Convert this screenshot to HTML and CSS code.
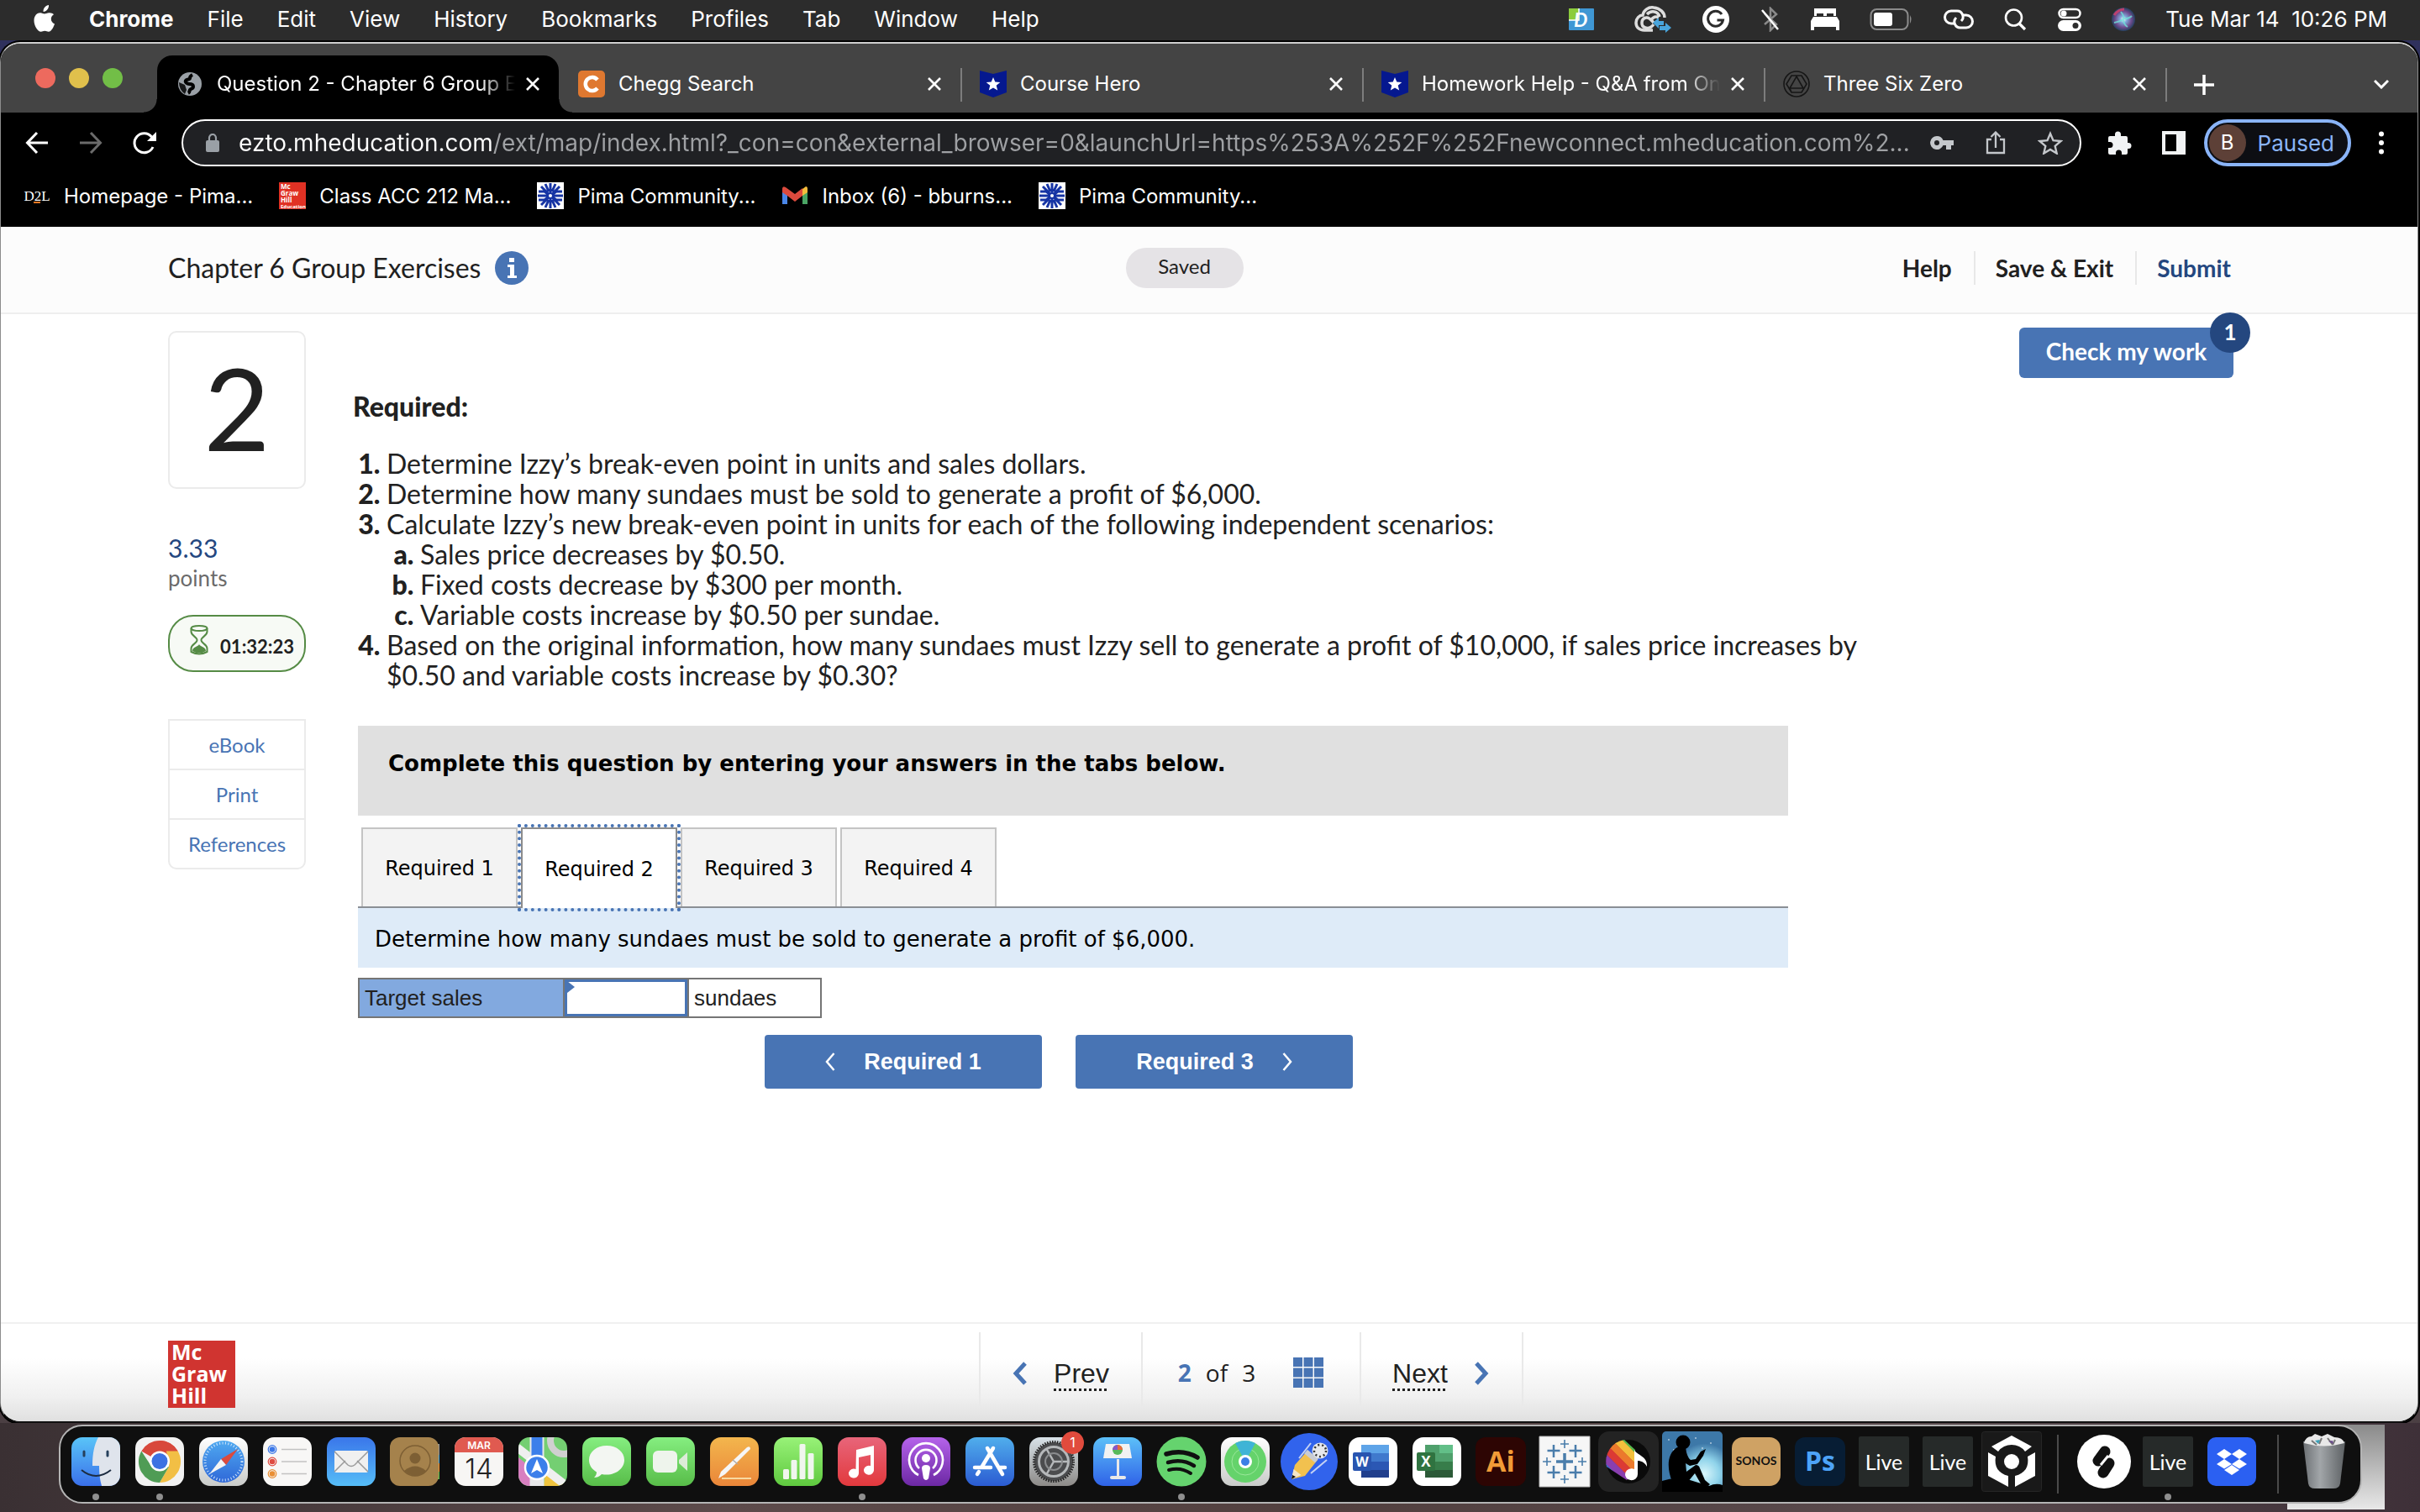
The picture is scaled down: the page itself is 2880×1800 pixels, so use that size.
FILE: index.html
```html
<!DOCTYPE html>
<html lang="en">
<head>
<meta charset="utf-8">
<title>Question 2 - Chapter 6 Group Exercises</title>
<link rel="stylesheet" href="styles.css">
</head>
<body>
<svg class="defs" aria-hidden="true">
  <defs>
    <linearGradient id="gBlue" x1="0" y1="0" x2="0" y2="1"><stop offset="0" stop-color="#3a76ea"/><stop offset="1" stop-color="#56bdf7"/></linearGradient>
    <linearGradient id="gFinder" x1="0" y1="0" x2="0" y2="1"><stop offset="0" stop-color="#59c4f8"/><stop offset="1" stop-color="#3a70ea"/></linearGradient>
    <linearGradient id="gSafari" x1="0" y1="0" x2="0" y2="1"><stop offset="0" stop-color="#4fa9f0"/><stop offset="1" stop-color="#2f68d8"/></linearGradient>
    <linearGradient id="gGreen" x1="0" y1="0" x2="0" y2="1"><stop offset="0" stop-color="#85ee80"/><stop offset="1" stop-color="#58bd49"/></linearGradient>
    <linearGradient id="gLime" x1="0" y1="0" x2="0" y2="1"><stop offset="0" stop-color="#98f278"/><stop offset="1" stop-color="#5fc93f"/></linearGradient>
    <linearGradient id="gOrange" x1="0" y1="0" x2="0" y2="1"><stop offset="0" stop-color="#f3b64d"/><stop offset="1" stop-color="#ea8639"/></linearGradient>
    <linearGradient id="gRed" x1="0" y1="0" x2="0" y2="1"><stop offset="0" stop-color="#e8657a"/><stop offset="1" stop-color="#e2393d"/></linearGradient>
    <linearGradient id="gPurple" x1="0" y1="0" x2="0" y2="1"><stop offset="0" stop-color="#b563ea"/><stop offset="1" stop-color="#6c28a4"/></linearGradient>
    <linearGradient id="gStore" x1="0" y1="0" x2="0" y2="1"><stop offset="0" stop-color="#50aeec"/><stop offset="1" stop-color="#2b5bd2"/></linearGradient>
    <linearGradient id="gGrey" x1="0" y1="0" x2="0" y2="1"><stop offset="0" stop-color="#d8e2e8"/><stop offset="1" stop-color="#8d8b88"/></linearGradient>
    <linearGradient id="gKey" x1="0" y1="0" x2="0" y2="1"><stop offset="0" stop-color="#5cc0f8"/><stop offset="1" stop-color="#2f62e8"/></linearGradient>
    <linearGradient id="gWhite" x1="0" y1="0" x2="0" y2="1"><stop offset="0" stop-color="#ffffff"/><stop offset="1" stop-color="#c9cbc9"/></linearGradient>
    <linearGradient id="gBin" x1="0" y1="0" x2="1" y2="0"><stop offset="0" stop-color="#6c7074"/><stop offset=".4" stop-color="#a2a6a9"/><stop offset="1" stop-color="#5d6164"/></linearGradient>
    <radialGradient id="gSiri"><stop offset="0" stop-color="#ffffff"/><stop offset=".3" stop-color="#7fa6d8"/><stop offset=".7" stop-color="#6d4a8c"/><stop offset="1" stop-color="#24415f"/></radialGradient>
    <radialGradient id="gKindle" cx=".7" cy=".7"><stop offset="0" stop-color="#d8f6fb"/><stop offset=".5" stop-color="#8fd3ea"/><stop offset="1" stop-color="#3d78a8"/></radialGradient>
    <clipPath id="tile"><rect width="58" height="58" rx="13"/></clipPath>
    <clipPath id="fan"><path d="M31 10A26 26 0 0 0 10 42L34 58l10-12V22z"/></clipPath>
    <symbol id="close" viewBox="0 0 18 18"><path d="M2 2l14 14M16 2L2 16" stroke="currentColor" stroke-width="2.6" fill="none"/></symbol>
    <symbol id="hero" viewBox="0 0 32 32"><path d="M0 0l16 4L32 0v26l-16 6L0 26z" fill="#05188f"/><path d="M16 8l2.300 5.400 6 .5-4.600 3.900 1.500 5.800L16 20.500l-5.200 3.100 1.500-5.800-4.600-3.900 6-.5z" fill="#fff"/></symbol>
    <symbol id="pima" viewBox="0 0 32 32"><path fill="#fff" d="M0 0h32v32H0z"/><g stroke="#1634a4" stroke-width="3" fill="none"><path d="M16 1v30M1 16h30M5 5l22 22M27 5L5 27M2 11h7l4 3M2 21h7l4-3M30 11h-7l-4 3M30 21h-7l-4-3M10 2l4 9M22 2l-4 9M10 30l4-9M22 30l-4-9"/></g><circle cx="16" cy="16" r="2" fill="#fff"/></symbol>
    <symbol id="live" viewBox="0 0 62 62"><rect x="1" y="1" width="60" height="60" rx="2" fill="#262a29"/><text x="31" y="41" font-size="25" text-anchor="middle" fill="#fff" font-family="Lato, sans-serif">Live</text></symbol>
  </defs>
</svg>

<header class="menubar">
  <svg class="apple" viewBox="0 0 26 32" aria-label="Apple"><path fill="#fff" d="M18 0c.3 2.200-.600 4.200-1.800 5.600C15 7 13.200 8 11.600 7.900c-.300-2.100.700-4.200 1.800-5.400C14.600 1.100 16.500.1 18 0zM24 11.200c-2 1.200-3.200 3-3.200 5.300 0 2.700 1.600 4.800 4.200 5.900-.9 2.700-3.600 9.300-7.200 9.300-1.800 0-2.500-1-4.500-1s-2.800 1-4.500 1C4.600 31.700.5 24.500.5 18.500c0-6 3.800-9.200 7.400-9.200 2 0 3.900 1.300 5 1.300 1.200 0 3.500-1.500 6.100-1.300 1.900.1 3.700.7 5 1.900z"/></svg>
  <nav class="menus" aria-label="Menu bar">
    <strong>Chrome</strong><span>File</span><span>Edit</span><span>View</span><span>History</span><span>Bookmarks</span><span>Profiles</span><span>Tab</span><span>Window</span><span>Help</span>
  </nav>
  <div class="status">
    <svg class="first" width="30" height="26" viewBox="0 0 30 26"><rect width="30" height="26" rx="1" fill="#3f97d4"/><path d="M0 0h12v14H0z" fill="#8ccc3c"/><path d="M0 14h12V0" stroke="#fff" stroke-width="1.500" fill="none"/><text x="6" y="22" font-size="23" font-style="italic" font-weight="700" fill="#fff" font-family="Lato, sans-serif">D</text></svg>
    <svg width="44" height="32" viewBox="0 0 44 32"><g fill="none" stroke="#ddd" stroke-width="3.500"><path d="M22 29H12C5 29 2 25 2 20c0-5 4-9 8-9 1-6 7-10 13-9 8 1 13 6 13 12"/><path d="M23 22c-3 4-7 5-10 4-6-2-5-11 1-12 4-1 6 3 9 6"/><path d="M15 10c5-5 13-4 15 3M20 17c2-4 6-5 9-3"/></g><path fill="#49a5dc" d="M22 20l7-6v4h6v5h-6v4zM44 26l-7-6v4h-7v5h7v3z"/></svg>
    <svg width="34" height="34" viewBox="0 0 34 34"><circle cx="17" cy="17" r="16" fill="#fff"/><path d="M24 11a9 9 0 1 0 1.500 7h-7" fill="none" stroke="#2c2c2c" stroke-width="3"/></svg>
    <svg width="24" height="30" viewBox="0 0 24 30"><path d="M5 8l14 13-7 7V2l7 7L5 21" fill="none" stroke="#8b8b8b" stroke-width="2.500"/><path d="M2 4l19 23" stroke="#fff" stroke-width="2.500"/></svg>
    <svg width="34" height="26" viewBox="0 0 34 26"><path fill="#fff" d="M4 0h26v9h-3V6h-8v3h-4V6H7v3H4zM0 15l3-5h28l3 5v11h-4v-4H4v4H0z"/></svg>
    <svg width="52" height="28" viewBox="0 0 52 28"><rect x="1.500" y="2" width="44" height="24" rx="7" fill="none" stroke="#8b8b8b" stroke-width="2"/><rect x="5" y="6" width="22" height="16" rx="3" fill="#fff"/><path d="M48 9q3 5 0 10z" fill="#8b8b8b"/></svg>
    <svg width="36" height="24" viewBox="0 0 36 24"><g fill="none" stroke="#fff" stroke-width="3"><path d="M14 17H9a7 7 0 0 1 0-15h7a7 7 0 0 1 5 12"/><path d="M22 7h5a7 7 0 0 1 0 15h-7a7 7 0 0 1-5-12"/></g></svg>
    <svg width="28" height="28" viewBox="0 0 28 28"><circle cx="11.500" cy="12" r="9.500" fill="none" stroke="#fff" stroke-width="2.600"/><path d="M18 19l7 7" stroke="#fff" stroke-width="3.200"/></svg>
    <svg width="28" height="28" viewBox="0 0 28 28"><rect x="1.500" y="2" width="25" height="10" rx="5" fill="none" stroke="#fff" stroke-width="2.500"/><circle cx="7" cy="7" r="3.500" fill="#fff"/><rect y="15" width="28" height="13" rx="6.500" fill="#fff"/><circle cx="21" cy="21.500" r="3.500" fill="#2c2c2c"/></svg>
    <svg width="28" height="28" viewBox="0 0 28 28"><circle cx="14" cy="14" r="14" fill="url(#gSiri)"/><path d="M3 9q5-7 12-7" stroke="#d8406c" stroke-width="3" fill="none" opacity=".8"/><path d="M3 18q10-2 11-5t-3-8M14 13q6 1 10-3M14 13q0 7 5 10" stroke="#6fe0d8" stroke-width="2" fill="none" opacity=".8"/></svg>
    <time>Tue Mar 14&nbsp; 10:26 PM</time>
  </div>
</header>

<div class="window">
  <div class="tabstrip">
    <div class="lights"><i class="red"></i><i class="yellow"></i><i class="green"></i></div>
    <div class="tab active">
      <svg class="fav" viewBox="0 0 32 32"><circle cx="16" cy="16" r="14" fill="#9aa0a6"/><path d="M19 5c-2 1-3 2-3 4s-4 1-5 3 2 4 4 4 5 0 5 3-3 2-4 4 0 3-2 4" fill="none" stroke="#000" stroke-width="4"/><path d="M3 14l7 3 2 6-2 5q-7-5-7-14z" fill="#000" opacity=".85"/></svg>
      <span class="tabtitle fade">Question 2 - Chapter 6 Group Exercises</span>
      <button class="ico" aria-label="Close tab"><svg width="18" height="18"><use href="#close"/></svg></button>
    </div>
    <div class="tab plain">
      <svg class="fav" viewBox="0 0 32 32"><rect width="32" height="32" rx="5" fill="#df7830"/><path d="M23 11a8 8 0 1 0 0 10" fill="none" stroke="#fff" stroke-width="4.500"/></svg>
      <span class="tabtitle">Chegg Search</span>
      <button class="ico" aria-label="Close tab"><svg width="18" height="18"><use href="#close"/></svg></button>
    </div>
    <div class="tab plain">
      <svg class="fav"><use href="#hero"/></svg>
      <span class="tabtitle">Course Hero</span>
      <button class="ico" aria-label="Close tab"><svg width="18" height="18"><use href="#close"/></svg></button>
    </div>
    <div class="tab plain">
      <svg class="fav"><use href="#hero"/></svg>
      <span class="tabtitle fade">Homework Help - Q&amp;A from Online Tutors</span>
      <button class="ico" aria-label="Close tab"><svg width="18" height="18"><use href="#close"/></svg></button>
    </div>
    <div class="tab plain">
      <svg class="fav" viewBox="0 0 32 32"><g fill="none" stroke="#161616" stroke-width="1.600"><circle cx="16" cy="16" r="15"/><path d="M10 6h12l6 10-6 10H10L4 16zM16 7l8 14H8zM8 21h16M10 26l-2-5"/></g></svg>
      <span class="tabtitle">Three Six Zero</span>
      <button class="ico" aria-label="Close tab"><svg width="18" height="18"><use href="#close"/></svg></button>
    </div>
    <button class="ico newtab" aria-label="New tab"><svg width="24" height="24" viewBox="0 0 24 24"><path d="M12 0v24M0 12h24" stroke="#fff" stroke-width="3.500"/></svg></button>
    <button class="ico tabsearch" aria-label="Search tabs"><svg width="18" height="12" viewBox="0 0 18 12"><path d="M1 2l8 8 8-8" fill="none" stroke="#fff" stroke-width="3"/></svg></button>
  </div>

  <div class="toolbar">
    <button class="ico" aria-label="Back"><svg width="28" height="28" viewBox="0 0 28 28"><path d="M27 14H3M14 2L2.500 14 14 26" fill="none" stroke="#fff" stroke-width="3"/></svg></button>
    <button class="ico" aria-label="Forward"><svg width="28" height="28" viewBox="0 0 28 28"><path d="M1 14h24M14 2l11.500 12L14 26" fill="none" stroke="#6b6b6b" stroke-width="3"/></svg></button>
    <button class="ico" aria-label="Reload"><svg width="28" height="28" viewBox="0 0 28 28"><path d="M24 19a11.500 11.500 0 1 1-1.500-12" fill="none" stroke="#fff" stroke-width="3"/><path d="M28 1v11H17z" fill="#fff"/></svg></button>
    <div class="urlbar">
      <svg width="16" height="22" viewBox="0 0 16 22"><rect y="8" width="16" height="14" rx="2" fill="#9aa0a6"/><path d="M4 9V5a4 4 0 0 1 8 0v4" fill="none" stroke="#9aa0a6" stroke-width="2.200"/></svg>
      <input class="url" type="text" aria-label="Address and search bar" value="ezto.mheducation.com/ext/map/index.html?_con=con&amp;external_browser=0&amp;launchUrl=https%253A%252F%252Fnewconnect.mheducation.com%2...">
      <button class="ico" aria-label="Passwords"><svg width="28" height="28" viewBox="0 0 28 28"><path fill="#c4c7cb" d="M8 6a8 8 0 0 1 7.500 5H28v6h-3v5h-6v-5h-3.500A8 8 0 1 1 8 6zm0 5a3 3 0 1 0 0 6 3 3 0 0 0 0-6z"/></svg></button>
      <button class="ico" aria-label="Share"><svg width="28" height="28" viewBox="0 0 28 28"><path d="M9 10H4v16h20V10h-5M14 20V2M8.500 7L14 1.500 19.500 7" fill="none" stroke="#c4c7cb" stroke-width="2.300"/></svg></button>
      <button class="ico" aria-label="Bookmark this tab"><svg width="30" height="28" viewBox="0 0 30 28"><path d="M15 3l3.500 8.200 9 .8-6.800 5.900 2 8.700L15 22l-7.700 4.600 2-8.700L2.500 12l9-.8z" fill="none" stroke="#c4c7cb" stroke-width="2.400"/></svg></button>
    </div>
    <button class="ico" aria-label="Extensions"><svg width="30" height="30" viewBox="0 0 30 30"><path fill="#f1f3f4" d="M10 5a3.500 3.500 0 0 1 7 0v2h6q2 0 2 2v6h1a3.500 3.500 0 0 1 0 7h-1v5q0 2-2 2h-5v-2a3.500 3.500 0 0 0-7 0v2H4q-2 0-2-2v-6h2a3.500 3.500 0 0 0 0-7H2V9q0-2 2-2h6z"/></svg></button>
    <button class="ico" aria-label="Side panel"><svg width="28" height="28" viewBox="0 0 28 28"><path fill="#f1f3f4" fill-rule="evenodd" d="M0 0h28v28H0zM4 4v20h13V4z"/></svg></button>
    <button class="profile"><span class="avatar">B</span>Paused</button>
    <button class="ico" aria-label="Menu"><svg width="8" height="28" viewBox="0 0 8 28"><g fill="#fff"><circle cx="4" cy="3.500" r="3"/><circle cx="4" cy="14" r="3"/><circle cx="4" cy="24.500" r="3"/></g></svg></button>
  </div>

  <nav class="bookmarks" aria-label="Bookmarks">
    <a href="#"><svg class="fav" viewBox="0 0 32 32"><text x="16" y="22" font-size="17" text-anchor="middle" fill="#fff" font-family="Liberation Serif, serif">D2L</text><path d="M12 24h8" stroke="#e87722" stroke-width="2"/></svg>Homepage - Pima...</a>
    <a href="#"><svg class="fav" viewBox="0 0 32 32"><path fill="#e03124" d="M0 0h32v32H0z"/><g fill="#fff" font-size="8" font-weight="700" font-family="Open Sans, sans-serif"><text x="2" y="8">Mc</text><text x="2" y="16">Graw</text><text x="2" y="24">Hill</text><text x="2" y="31" font-size="6">Education</text></g></svg>Class ACC 212 Ma...</a>
    <a href="#"><svg class="fav"><use href="#pima"/></svg>Pima Community...</a>
    <a href="#"><svg class="fav" viewBox="0 0 32 32"><path d="M1 26V7l6 4v15z" fill="#4a86e8"/><path d="M31 26V7l-6 4v15z" fill="#4aa564"/><path d="M25 8l4-3q2 0 2 3v4l-6 4z" fill="#f4bd3c"/><path d="M1 8q0-4 4-2l11 8 9-7v9l-9 7-9-7-6-4z" fill="#dc4a3d"/></svg>Inbox (6) - bburns...</a>
    <a href="#"><svg class="fav"><use href="#pima"/></svg>Pima Community...</a>
  </nav>

  <div class="page">
    <header class="apphead">
      <h1>Chapter 6 Group Exercises <svg width="40" height="40" viewBox="0 0 40 40" aria-label="Information"><circle cx="20" cy="20" r="20" fill="#4874b4"/><path fill="#fff" d="M17 8h6v5h-6zM15 16h8v13h3v3H15v-3h3V19h-3z"/></svg></h1>
      <span class="saved">Saved</span>
      <nav class="actions"><a href="#">Help</a><a href="#">Save &amp; Exit</a><a href="#" class="submit">Submit</a></nav>
    </header>

    <main class="content">
      <aside class="side">
        <div class="qnum">2</div>
        <p class="points"><b>3.33</b>points</p>
        <div class="timer"><svg width="22" height="36" viewBox="0 0 22 36"><g fill="none" stroke="#558b45" stroke-width="2"><ellipse cx="11" cy="4" rx="9.500" ry="3"/><path d="M1.500 4v4c0 5 7 6 7 10s-7 5-7 10v4q9.500 5 19 0v-4c0-5-7-6-7-10s7-5 7-10V4"/></g><path d="M11 23c1 3 8 3 8 8q-8 5-16 0c0-5 7-5 8-8z" fill="#558b45"/></svg><span>01:32:23</span></div>
        <nav class="tools"><a href="#">eBook</a><a href="#">Print</a><a href="#">References</a></nav>
      </aside>

      <article class="question">
        <h2>Required:</h2>
        <ol class="reqs">
          <li>Determine Izzy’s break-even point in units and sales dollars.</li>
          <li>Determine how many sundaes must be sold to generate a profit of $6,000.</li>
          <li>Calculate Izzy’s new break-even point in units for each of the following independent scenarios:
            <ol>
              <li>Sales price decreases by $0.50.</li>
              <li>Fixed costs decrease by $300 per month.</li>
              <li>Variable costs increase by $0.50 per sundae.</li>
            </ol>
          </li>
          <li>Based on the original information, how many sundaes must Izzy sell to generate a profit of $10,000, if sales price increases by $0.50 and variable costs increase by $0.30?</li>
        </ol>

        <section class="answer">
          <p class="banner">Complete this question by entering your answers in the tabs below.</p>
          <div class="reqtabs" role="tablist">
            <button role="tab" aria-selected="false">Required 1</button>
            <button role="tab" aria-selected="true">Required 2</button>
            <button role="tab" aria-selected="false">Required 3</button>
            <button role="tab" aria-selected="false">Required 4</button>
          </div>
          <p class="prompt">Determine how many sundaes must be sold to generate a profit of $6,000.</p>
          <table class="sheet">
            <tr><th scope="row"><label for="target">Target sales</label></th><td class="entry"><input id="target" type="text"></td><td class="unit">sundaes</td></tr>
          </table>
          <div class="steps">
            <button><svg width="12" height="22" viewBox="0 0 12 22"><path d="M10.500 1L2 11l8.500 10" fill="none" stroke="#fff" stroke-width="2.500"/></svg>Required 1</button>
            <button>Required 3<svg width="12" height="22" viewBox="0 0 12 22"><path d="M1.500 1L10 11 1.500 21" fill="none" stroke="#fff" stroke-width="2.500"/></svg></button>
          </div>
        </section>
      </article>

      <button class="check">Check my work<span class="badge">1</span></button>
    </main>

    <footer class="appfoot">
      <div class="mgh"><span>Mc</span><span>Graw</span><span>Hill</span></div>
      <nav class="pager">
        <a href="#" class="step"><svg width="20" height="28" viewBox="0 0 20 28"><path d="M16 2L5 14l11 12" fill="none" stroke="#4874b4" stroke-width="5"/></svg><span>Prev</span></a>
        <div class="count"><b>2</b><span>of</span><span>3</span><button class="ico" aria-label="Question list"><svg width="36" height="36" viewBox="0 0 36 36"><path fill="#4874b4" d="M0 0h11v11H0zM12.500 0h11v11h-11zM25 0h11v11H25zM0 12.500h11v11H0zM12.500 12.500h11v11h-11zM25 12.500h11v11H25zM0 25h11v11H0zM12.500 25h11v11h-11zM25 25h11v11H25z"/></svg></button></div>
        <a href="#" class="step"><span>Next</span><svg width="20" height="28" viewBox="0 0 20 28"><path d="M4 2l11 12L4 26" fill="none" stroke="#4874b4" stroke-width="5"/></svg></a>
      </nav>
    </footer>
  </div>
</div>

<div class="desktop">
  <div class="dock">
    <span class="app open"><svg width="58" height="58" viewBox="0 0 58 58"><g clip-path="url(#tile)"><path fill="url(#gFinder)" d="M0 0h58v58H0z"/><path fill="#dfe4ec" d="M32 0h26v58H36c-2-7-3-14-3-24h-8C25 20 27 9 32 0z"/></g><path d="M15 17v5M43 17v5" stroke="#26405c" stroke-width="3" stroke-linecap="round"/><path d="M12 39q17 14 35 0" fill="none" stroke="#1c2c40" stroke-width="2"/></svg></span>
    <span class="app open"><svg width="58" height="58" viewBox="0 0 58 58"><rect width="58" height="58" rx="13" fill="#f2f2f2"/><path d="M29 29L7.300 16.500A25 25 0 0 1 50.700 16.500z" fill="#d8483b"/><path d="M29 4a25 25 0 0 1 21.700 12.500H29z" fill="#d8483b"/><path d="M50.700 16.500A25 25 0 0 1 29 54l11-19-3-18.500z" fill="#f2bf45"/><path d="M29 54A25 25 0 0 1 7.300 16.500L20 36l20-1z" fill="#4f9c55"/><circle cx="29" cy="28.500" r="12" fill="#fff"/><circle cx="29" cy="28.500" r="9.500" fill="#3d72e2"/></svg></span>
    <span class="app"><svg width="58" height="58" viewBox="0 0 58 58"><rect width="58" height="58" rx="13" fill="url(#gWhite)"/><circle cx="29" cy="29" r="25" fill="url(#gSafari)"/><circle cx="29" cy="29" r="22" fill="none" stroke="#cfe4fa" stroke-width="3" stroke-dasharray="1 2.500"/><path d="M46 14L32 33l-6-7z" fill="#dc4a3d"/><path d="M12 44l14-18 6 7z" fill="#f4f4f4"/></svg></span>
    <span class="app"><svg width="58" height="58" viewBox="0 0 58 58"><rect width="58" height="58" rx="13" fill="#f8f7f6"/><path d="M22 14.500h30M22 29h30M22 43.500h30" stroke="#c2c2c2" stroke-width="1.500"/><g fill="none" stroke-width="1.200"><circle cx="11" cy="14.500" r="4.800" stroke="#3c78e8"/><circle cx="11" cy="29" r="4.800" stroke="#df4b41"/><circle cx="11" cy="43.500" r="4.800" stroke="#e98f35"/></g><circle cx="11" cy="14.500" r="3.300" fill="#3c78e8"/><circle cx="11" cy="29" r="3.300" fill="#df4b41"/><circle cx="11" cy="43.500" r="3.300" fill="#e98f35"/></svg></span>
    <span class="app"><svg width="58" height="58" viewBox="0 0 58 58"><rect width="58" height="58" rx="13" fill="url(#gBlue)"/><rect x="9" y="16" width="40" height="26" rx="2" fill="#f0f0f0"/><path d="M9 17l16 16q4 3 8 0l16-16M9 41l13-13M49 41L36 28" fill="none" stroke="#9a9a9a" stroke-width="1.500"/></svg></span>
    <span class="app"><svg width="60" height="58" viewBox="0 0 60 58"><path d="M56 8h3v13h-3z" fill="#9a9a9a"/><path d="M56 21h3v10h-3z" fill="#48a8e0"/><path d="M56 31h3v10h-3z" fill="#f09030"/><path d="M56 41h3v9h-3z" fill="#5cc050"/><rect width="58" height="58" rx="12" fill="#a5824c"/><circle cx="30" cy="28" r="18" fill="none" stroke="#7d5f34" stroke-width="1.500"/><circle cx="30" cy="25" r="6.500" fill="#7d5f34"/><path d="M17 40q13-11 26 0-12 12-26 0z" fill="#7d5f34"/></svg></span>
    <span class="app"><svg width="58" height="58" viewBox="0 0 58 58"><g clip-path="url(#tile)"><path fill="#f7f6f4" d="M0 0h58v58H0z"/><path fill="#e05a50" d="M0 0h58v18H0z"/></g><text x="29" y="14" font-size="12" font-weight="600" text-anchor="middle" fill="#fff" font-family="Inter, sans-serif">MAR</text><text x="29" y="49" font-size="33" font-weight="300" text-anchor="middle" fill="#222" font-family="Inter, sans-serif">14</text></svg></span>
    <span class="app"><svg width="58" height="58" viewBox="0 0 58 58"><g clip-path="url(#tile)"><path fill="#74cf72" d="M0 0h58v58H0z"/><path fill="#d77fc0" d="M0 24l24 20v14H0z"/><path fill="#f0c440" d="M32 44l26 14H30z"/><path d="M-2 12l62 48" stroke="#efefef" stroke-width="10"/><path d="M22 0v58" stroke="#e8e8ea" stroke-width="17"/><path d="M22 0v30" stroke="#3c7fea" stroke-width="13"/><circle cx="54" cy="4" r="16" fill="none" stroke="#d0d0d0" stroke-width="8"/></g><circle cx="22" cy="36" r="14" fill="#3c7fea" stroke="#fff" stroke-width="2.500"/><path d="M22 26l7 17-7-4-7 4z" fill="#fff"/></svg></span>
    <span class="app"><svg width="58" height="58" viewBox="0 0 58 58"><rect width="58" height="58" rx="13" fill="url(#gGreen)"/><path d="M29 10c12 0 21 7.500 21 17s-9 17.500-21 17.500c-2 0-4 0-6-.5-3 3-6 4-9 4 2-2 3-4 3-6.500C11 38 8 33 8 27c0-9.500 9-17 21-17z" fill="#f3f6f2"/></svg></span>
    <span class="app"><svg width="58" height="58" viewBox="0 0 58 58"><rect width="58" height="58" rx="13" fill="url(#gGreen)"/><rect x="8" y="16" width="29" height="26" rx="6" fill="#eef4ec"/><path d="M39 27l10-9v22l-10-9z" fill="#dcebd8"/></svg></span>
    <span class="app"><svg width="58" height="58" viewBox="0 0 58 58"><rect width="58" height="58" rx="13" fill="url(#gOrange)"/><path d="M14 49h35" stroke="#f8d9a0" stroke-width="2"/><path d="M10 49l3-8 31-29q4-2 4 2L18 44z" fill="#f6f6f6"/><path d="M27 27l6 5" stroke="#aaa" stroke-width="1.500"/></svg></span>
    <span class="app"><svg width="58" height="58" viewBox="0 0 58 58"><rect width="58" height="58" rx="13" fill="url(#gLime)"/><g fill="#f0f6ee"><rect x="11" y="38" width="7" height="12" rx="1.500"/><rect x="20.500" y="27" width="7" height="23" rx="1.500"/><rect x="30.500" y="8" width="7" height="42" rx="1.500"/><rect x="40.500" y="19" width="7" height="31" rx="1.500"/></g></svg></span>
    <span class="app open"><svg width="58" height="58" viewBox="0 0 58 58"><rect width="58" height="58" rx="13" fill="url(#gRed)"/><path d="M22 15l21-5v29a6 5.500 0 1 1-4-5V21l-14 3v19a6 5.500 0 1 1-3.500-5z" fill="#fff"/></svg></span>
    <span class="app"><svg width="58" height="58" viewBox="0 0 58 58"><rect width="58" height="58" rx="13" fill="url(#gPurple)"/><g fill="none" stroke="#fff" stroke-width="2.600"><path d="M20 45a20 20 0 1 1 18 0"/><path d="M21 37a12.500 12.500 0 1 1 16 0"/></g><circle cx="29" cy="25" r="5" fill="#fff"/><path d="M24 37q0-4 5-4t5 4l-2 12q-3 4-6 0z" fill="#fff"/></svg></span>
    <span class="app"><svg width="58" height="58" viewBox="0 0 58 58"><rect width="58" height="58" rx="13" fill="url(#gStore)"/><g stroke="#fff" stroke-width="4.500" stroke-linecap="round"><path d="M33 13L19 36M26 13l18 31M11 36h19M40 36h7M16 41l-2 3"/></g></svg></span>
    <span class="app"><svg width="58" height="58" viewBox="0 0 58 58"><rect width="58" height="58" rx="13" fill="url(#gGrey)"/><circle cx="29" cy="29" r="23" fill="#4b4c4e"/><circle cx="29" cy="29" r="23.500" fill="none" stroke="#222" stroke-width="3" stroke-dasharray="1.500 1.500"/><circle cx="29" cy="29" r="17.500" fill="none" stroke="#b5b8ba" stroke-width="3"/><path d="M29 29h17M29 29l-8.500-15M29 29l-8.500 15" stroke="#b5b8ba" stroke-width="2.500"/><circle cx="29" cy="29" r="10" fill="none" stroke="#8a8c8e" stroke-width="2"/></svg><span class="note">1</span></span>
    <span class="app"><svg width="58" height="58" viewBox="0 0 58 58"><rect width="58" height="58" rx="13" fill="url(#gKey)"/><path d="M15 8h28l3 17H12z" fill="#f2f2f2"/><circle cx="29" cy="15" r="6" fill="#59b95a"/><path d="M29 15V9a6 6 0 0 1 6 6z" fill="#e8683c"/><path d="M29 15h-6a6 6 0 0 1 6-6z" fill="#8a55c8"/><path d="M28 26h3v21h-3z" fill="#e8e8e8"/><rect x="20" y="46" width="19" height="4" rx="2" fill="#e8e8e8"/></svg></span>
    <span class="app open"><svg width="60" height="60" viewBox="0 0 60 60"><circle cx="30" cy="30" r="29.500" fill="#65d36e"/><g fill="none" stroke="#101010" stroke-linecap="round"><path d="M12 21q20-6 37 4" stroke-width="5.500"/><path d="M14 31q17-5 31 4" stroke-width="4.500"/><path d="M15 40q14-4 26 4" stroke-width="4"/></g></svg></span>
    <span class="app"><svg width="58" height="58" viewBox="0 0 58 58"><rect width="58" height="58" rx="13" fill="url(#gWhite)"/><circle cx="29" cy="29" r="25" fill="#65d36b"/><circle cx="29" cy="29" r="16" fill="none" stroke="#9ae89a" stroke-width="1"/><path d="M29 29L17 7q12-6 24 0z" fill="#3fb4d6"/><circle cx="29" cy="29" r="8" fill="#fff"/><circle cx="29" cy="29" r="5" fill="#3c7fe6"/></svg></span>
    <span class="app"><svg width="68" height="68" viewBox="0 0 68 68"><circle cx="34" cy="34" r="34" fill="#3163ec"/><path d="M13 55l4-17 14-16 13 10-15 19z" fill="#f2c14f"/><path d="M13 55l2.500-12 9 7z" fill="#f5e6c8"/><path d="M13 55l1-5 4 2z" fill="#111"/><path d="M30 22l13 11" stroke="#c9ccd2" stroke-width="6"/><circle cx="47" cy="21" r="9.500" fill="#e6e8ec"/><circle cx="47" cy="21" r="7" fill="none" stroke="#333" stroke-width="2.500" stroke-dasharray="2 3"/><path d="M36 12L22 30M55 32L36 48" stroke="#c4d2f4" stroke-width="2"/></svg></span>
    <span class="app"><svg width="58" height="58" viewBox="0 0 58 58"><rect width="58" height="58" rx="13" fill="#fff"/><path fill="#5ea4e8" d="M15 9h33v10H15z"/><path fill="#4079cd" d="M15 19h33v10H15z"/><path fill="#2b57b4" d="M15 29h33v10H15z"/><path fill="#213f8c" d="M15 39h33v9H15z"/><rect x="5" y="18" width="22" height="22" rx="2" fill="#2955b0"/><text x="16" y="35" font-size="16" font-weight="700" text-anchor="middle" fill="#fff" font-family="Open Sans, sans-serif">W</text></svg></span>
    <span class="app"><svg width="58" height="58" viewBox="0 0 58 58"><rect width="58" height="58" rx="13" fill="#fff"/><path fill="#4fa06c" d="M15 9h33v20H15z"/><path fill="#62bf88" d="M32 9h16v10H32z"/><path fill="#377d4a" d="M15 29h33v10H15z"/><path fill="#2c5a38" d="M15 39h33v9H15z"/><rect x="5" y="18" width="22" height="22" rx="2" fill="#2f7340"/><text x="16" y="35" font-size="17" font-weight="700" text-anchor="middle" fill="#fff" font-family="Open Sans, sans-serif">X</text></svg></span>
    <span class="app"><svg width="60" height="58" viewBox="0 0 60 58"><rect width="60" height="58" rx="12" fill="#2d0503"/><text x="30" y="41" font-size="34" font-weight="700" text-anchor="middle" fill="#f19b37" font-family="Open Sans, sans-serif">Ai</text></svg></span>
    <span class="app"><svg width="62" height="62" viewBox="0 0 62 62"><path d="M1 1h60v60H1z" fill="#f6f6f6" stroke="#b8b8b8"/><g stroke="#4a7dab"><path d="M31 21v20M21 31h20" stroke-width="3.500"/><path d="M18 11v15M10.500 18h15M44 11v15M36.500 18h15M18 36v15M10.500 44h15M44 36v15M36.500 44h15" stroke-width="2.500"/><path d="M31 5v10M26 10h10M31 47v10M26 52h10M10 26v10M5 31h10M52 26v10M47 31h10" stroke-width="1.600"/></g></svg></span>
    <span class="app"><svg width="72" height="72" viewBox="0 0 72 72"><rect width="72" height="72" rx="13" fill="#232323"/><circle cx="36" cy="36" r="26" fill="#0a0a0a"/><g clip-path="url(#fan)" stroke-width="9"><path d="M26 2l34 34" stroke="#55b74d"/><path d="M20 8l34 34" stroke="#f3c03c"/><path d="M14 14l34 34" stroke="#ec7a2c"/><path d="M8 20l38 38" stroke="#dc3a34"/><path d="M3 27l38 38" stroke="#8a3fb0"/><path d="M-2 34l38 38" stroke="#3a72d8"/></g><path d="M43 22c2 6 16 7 15 20-3-6-8-7-11-7v16a7.500 7 0 1 1-4-6z" fill="#fff"/></svg></span>
    <span class="app"><svg width="72" height="72" viewBox="0 0 72 72"><rect width="72" height="72" rx="5" fill="url(#gKindle)"/><g fill="#fff"><circle cx="8" cy="10" r=".8"/><circle cx="40" cy="8" r=".8"/><circle cx="58" cy="14" r=".8"/><circle cx="48" cy="20" r=".8"/><circle cx="14" cy="22" r=".8"/></g><path d="M0 59q14-5 30-2l26 8q8-4 16-1v8H0z" fill="#000"/><circle cx="25" cy="13" r="8.500" fill="#000"/><path d="M18 19h10l1 6q2 7 5 9l6-1 6-9 6-3-3 8-7 10-9 2-5-3 1 10 11-8q4 0 5 4l6 14 6 5-2 2-8-1-8-14-9 11-18-1C6 45 5 27 18 19z" fill="#000"/></svg></span>
    <span class="app"><svg width="58" height="58" viewBox="0 0 58 58"><rect width="58" height="58" rx="13" fill="#cfa264"/><text x="29" y="33" font-size="14" font-weight="700" text-anchor="middle" fill="#111" font-family="Lato, sans-serif">SONOS</text></svg></span>
    <span class="app"><svg width="60" height="58" viewBox="0 0 60 58"><rect width="60" height="58" rx="12" fill="#071d34"/><text x="30" y="40" font-size="32" font-weight="700" text-anchor="middle" fill="#4da3f8" font-family="Open Sans, sans-serif">Ps</text></svg></span>
    <span class="app"><svg width="62" height="62"><use href="#live"/></svg></span>
    <span class="app"><svg width="62" height="62"><use href="#live"/></svg></span>
    <span class="app"><svg width="72" height="72" viewBox="0 0 72 72"><rect x=".5" y=".5" width="71" height="71" rx="3" fill="#191919" stroke="#262626"/><path d="M36 5l24 13-8 6a20 20 0 0 0-32 0l-8-6zM8 25l9 5c-2 12 3 20 15 23v13L8 53zM64 25l-9 5c2 12-3 20-15 23v13l24-13z" fill="#fff"/><circle cx="36" cy="36" r="9" fill="#fff"/></svg></span>
    <span class="rule"></span>
    <span class="app"><svg width="64" height="64" viewBox="0 0 64 64"><circle cx="32" cy="32" r="32" fill="#fff"/><g stroke="#111" stroke-width="13" stroke-linecap="round"><path d="M33 20l-8 11M38 34l-7 11"/></g><path d="M28 36l9-11" stroke="#fff" stroke-width="3"/></svg></span>
    <span class="app open"><svg width="62" height="62"><use href="#live"/></svg></span>
    <span class="app"><svg width="58" height="58" viewBox="0 0 58 58"><rect width="58" height="58" rx="10" fill="#2b60f2"/><path fill="#fff" d="M20 14l9 6-9 6-9-6zM38 14l9 6-9 6-9-6zM20 26l9 6-9 5.500-9-5.500zM38 26l9 6-9 5.500-9-5.500zM29 33l9 6-9 6-9-6z"/></svg></span>
    <span class="rule"></span>
    <span class="app"><svg width="54" height="68" viewBox="0 0 54 68"><path d="M2 10h50l-6 50q-1 6-8 6H16q-7 0-8-6z" fill="url(#gBin)"/><path d="M3 12q2-8 9-8l4-3 8 3 7-3 8 4q10 0 12 7-24 7-48 0z" fill="#e8e8e8"/><path d="M12 9l6 5M24 6l-3 7M31 6l6 8M40 8l-3 6" stroke="#777" stroke-width="2"/><path d="M16 9l6-1-2 5z" fill="#3aa0b8"/><path d="M32 10l5-1 1 4z" fill="#6a4a8c"/></svg></span>
  </div>
</div>
</body>
</html>
```

FILE: styles.css
```css
* { box-sizing: border-box; }

body {
  margin: 0;
  min-height: 100vh;
  display: flex;
  flex-direction: column;
  background: linear-gradient(#2e3160 0, #3a2f3c 30%, #4d4144 100%);
  font-family: Inter, "Liberation Sans", sans-serif;
  color: #212121;
}

p, h1, h2, ol { margin: 0; padding: 0; }
a { color: inherit; text-decoration: none; }
svg { display: block; flex: none; }
button { font: inherit; border: 0; cursor: pointer; }
.defs { position: absolute; width: 0; height: 0; }
.ico { background: none; padding: 0; color: #fff; flex: none; }

/* System menu bar */
.menubar {
  height: 48px;
  padding: 0 39px 2px 40px;
  display: flex;
  align-items: center;
  background: #2c2c2c;
  color: #fff;
  font-size: 26px;
  line-height: 32px;
  white-space: nowrap;
}
.apple { width: 26px; height: 32px; margin-right: 40px; margin-bottom: 2px; }
.menus { display: flex; gap: 40px; flex: 1; }
.menus strong { font-weight: 700; }
.status { display: flex; align-items: center; gap: 36px; }
.status .first { margin-right: 12px; }

/* Browser window */
.window {
  flex: 1;
  margin: 2px 2px 0 0;
  display: flex;
  flex-direction: column;
  overflow: hidden;
  background: #000;
  border: 1px solid #8c8c8c;
  border-top: 2px solid #cfcfcf;
  border-bottom: 2px solid #111;
  border-radius: 24px;
  box-shadow: 0 0 0 2px #000;
}

.tabstrip {
  height: 82px;
  padding-top: 14px;
  display: flex;
  background: #444;
  color: #fff;
  font-size: 24px;
}
.lights { flex: none; width: 186px; padding: 15px 0 0 41px; display: flex; gap: 16px; }
.lights i { width: 24px; height: 24px; border-radius: 50%; }
.red { background: #ed6a5e; }
.yellow { background: #e0c04c; }
.green { background: #72be47; }
.tab {
  flex: 0 1 478px;
  min-width: 0;
  padding: 0 22px 0 23px;
  display: flex;
  align-items: center;
  gap: 16px;
  position: relative;
}
.tab.active { background: #000; border-radius: 18px 18px 0 0; }
.tab.active::before, .tab.active::after {
  content: "";
  position: absolute;
  bottom: 0;
  width: 16px;
  height: 16px;
}
.tab.active::before { left: -16px; background: radial-gradient(circle at 0 0, #444 15px, #000 16px); }
.tab.active::after { right: -16px; background: radial-gradient(circle at 100% 0, #444 15px, #000 16px); }
.tab.plain:not(.active) + .tab.plain::before {
  content: "";
  position: absolute;
  left: 0;
  top: 15px;
  width: 2px;
  height: 40px;
  background: #7d7d7d;
}
.fav { width: 32px; height: 32px; }
.tabtitle { flex: 1; overflow: hidden; white-space: nowrap; line-height: 32px; }
.fade { margin-right: -6px; mask-image: linear-gradient(90deg, #000 calc(100% - 44px), transparent calc(100% - 2px)); }
.newtab { padding: 0 32px; border-left: 2px solid #7d7d7d; height: 40px; margin-top: 15px; }
.newtab svg { height: 24px; }
.tabsearch { margin: 0 34px 0 auto; }

.toolbar {
  height: 72px;
  padding: 0 39px 0 29px;
  display: flex;
  align-items: center;
  gap: 36px;
}
.urlbar {
  flex: 1;
  height: 56px;
  margin: 0 -6px 0 -6px;
  padding: 0 20px 0 27px;
  display: flex;
  align-items: center;
  gap: 36px;
  border: 2px solid #fff;
  border-radius: 28px;
  background: #202124;
}
.urlbar svg + .url { margin: 0 -24px 0 -20px; }
.url {
  flex: 1;
  min-width: 0;
  padding: 0 0 0 7px;
  border: 0;
  outline: 0;
  font: 28px/36px Inter, sans-serif;
  color: transparent;
  background: linear-gradient(90deg, #fff 308px, #9fa1a4 308px);
  background-clip: text;
}
.profile {
  height: 56px;
  margin: 0 -4px 0 -14px;
  padding: 0 16px 0 2px;
  display: flex;
  align-items: center;
  gap: 14px;
  border: 4px solid #8ab4f8;
  border-radius: 28px;
  background: #0d0e13;
  color: #8ab4f8;
  font-size: 26px;
}
.avatar {
  width: 44px;
  height: 44px;
  border-radius: 50%;
  background: #5d4037;
  color: #fff;
  line-height: 44px;
  font-size: 24px;
}

.bookmarks {
  height: 64px;
  padding: 0 27px 10px;
  display: flex;
  align-items: center;
  gap: 31px;
  color: #fff;
  font-size: 24px;
  white-space: nowrap;
}
.bookmarks a { display: flex; align-items: center; gap: 16px; }

/* Assignment page */
.page {
  flex: 1;
  display: flex;
  flex-direction: column;
  background: #fff;
  font-family: Lato, "Open Sans", sans-serif;
}
.apphead {
  height: 104px;
  padding: 0 222px 4px 199px;
  display: grid;
  grid-template-columns: 1fr auto 1fr;
  align-items: center;
  background: #fcfcfc;
  border-bottom: 2px solid #eee;
}
.apphead h1 { display: flex; align-items: center; gap: 17px; font-size: 32px; line-height: 40px; font-weight: 400; }
.saved {
  width: 140px;
  height: 48px;
  margin-right: 36px;
  border-radius: 24px;
  background: #e5e3e6;
  text-align: center;
  font-size: 24px;
  line-height: 44px;
}
.actions { display: flex; justify-content: flex-end; font-size: 28px; line-height: 40px; font-weight: 700; }
.actions a + a { margin-left: 26px; padding-left: 24px; border-left: 2px solid #e8e8e8; }
.submit { color: #24477f; }

.content {
  flex: 1;
  padding: 20px 219px 0 199px;
  display: flex;
  align-items: flex-start;
  justify-content: space-between;
}
.side { flex: none; width: 164px; }
.qnum {
  height: 188px;
  border: 2px solid #ebebeb;
  border-radius: 10px;
  text-align: center;
  font-size: 136px;
  line-height: 178px;
}
.points { margin-top: 52px; font-size: 26px; line-height: 36px; color: #6b6b6b; }
.points b { display: block; font-size: 30px; font-weight: 400; color: #24477f; }
.timer {
  height: 68px;
  margin-top: 26px;
  padding: 0 12px 0 24px;
  display: flex;
  align-items: center;
  justify-content: space-between;
  border: 2px solid #558b45;
  border-radius: 30px;
  background: #f7faf5;
  font-size: 22px;
  font-weight: 700;
}
.timer svg { margin-bottom: 8px; }
.timer span { padding-top: 6px; }
.tools {
  margin-top: 56px;
  border: 2px solid #ebebeb;
  border-radius: 0 0 10px 10px;
  text-align: center;
  color: #4874b4;
  font-size: 24px;
  line-height: 57px;
}
.tools a { display: block; }
.tools a + a { border-top: 2px solid #ebebeb; }

.question { flex: 0 1 1820px; margin: 72px auto 0 56px; font-size: 32px; line-height: 36px; }
.question h2 { font-size: 32px; line-height: 36px; font-weight: 900; }
.reqs { margin-top: 32px; padding-left: 40px; }
.reqs ol { padding-left: 40px; list-style: lower-alpha; }
.reqs li::marker { font-weight: 900; }

.answer {
  margin: 42px 0 0 6px;
  max-width: 1702px;
  font-family: Verdana, "DejaVu Sans", sans-serif;
  color: #000;
}
.banner { height: 107px; padding: 27px 36px; background: #e0e0e0; font-size: 26px; font-weight: 700; }
.reqtabs { display: flex; gap: 4px; padding: 14px 4px 0; border-bottom: 2px solid #8a8f95; }
.reqtabs button {
  width: 186px;
  height: 94px;
  padding: 2px 0 0;
  border: 2px solid #c4c4c4;
  border-bottom: 0;
  background: #f3f3f3;
  font-size: 24px;
}
.reqtabs [aria-selected="true"] {
  height: 96px;
  margin-bottom: -2px;
  border-color: #8c8c8c;
  background: #fff;
  outline: 4px dotted #4874b4;
}
.prompt { height: 71px; padding: 19px 20px; background: #deebf8; font-size: 26px; }
.sheet {
  margin-top: 12px;
  width: 552px;
  table-layout: fixed;
  border-collapse: collapse;
  font: 26px/42px "Liberation Sans", Arial, sans-serif;
  color: #212121;
}
.sheet th, .sheet td { height: 46px; padding: 0 6px; border: 2px solid #757575; text-align: left; font-weight: 400; }
.sheet th { width: 244px; background: #82a9df; }
.sheet .entry { width: 148px; padding: 0; position: relative; }
.entry input { display: block; width: 100%; height: 44px; border: 3px solid #4874b4; background: #fff; font: inherit; outline: 0; }
.entry::before {
  content: "";
  position: absolute;
  left: 3px;
  top: 2px;
  border: 7px solid transparent;
  border-left: 9px solid #4874b4;
  border-right: 0;
}
.steps { margin-top: 20px; padding-right: 34px; display: flex; justify-content: center; gap: 40px; }
.steps button {
  width: 330px;
  height: 64px;
  padding: 0;
  display: flex;
  align-items: center;
  justify-content: center;
  gap: 34px;
  border-radius: 4px;
  background: #4874b4;
  color: #fff;
  font: 700 27px/32px "Liberation Sans", Arial, sans-serif;
}

.check {
  flex: none;
  width: 255px;
  height: 60px;
  margin-top: -4px;
  padding: 0 0 4px;
  position: relative;
  border-radius: 6px;
  background: #4874b4;
  color: #fff;
  font-size: 28px;
  font-weight: 700;
}
.badge {
  position: absolute;
  right: -20px;
  top: -18px;
  width: 48px;
  height: 48px;
  border-radius: 50%;
  background: #24477f;
  font-size: 26px;
  line-height: 46px;
}

.appfoot {
  height: 118px;
  padding: 10px 0 0 199px;
  display: flex;
  border-top: 2px solid #f0f0f0;
  background: linear-gradient(#fff 35%, #f0f0f0 75%, #e0e0e0);
}
.mgh {
  width: 80px;
  height: 80px;
  margin: 10px 0 0;
  padding: 1px 4px;
  display: grid;
  background: #d03430;
  color: #fff;
  font: 700 25px/25px "Open Sans", sans-serif;
}
.pager {
  height: 88px;
  margin: 0 auto;
  padding-right: 180px;
  display: flex;
  font-size: 32px;
  color: #212121;
}
.step, .count { display: flex; align-items: center; justify-content: center; border-left: 2px solid #e9e9e9; }
.step { width: 193px; gap: 30px; padding-top: 10px; font-family: "Liberation Sans", Arial, sans-serif; }
.step:last-child { width: 195px; border-right: 2px solid #e9e9e9; }
.step span { text-decoration: underline dotted 3px; text-underline-offset: 7px; }
.count { width: 260px; gap: 17px; padding-top: 8px; font-size: 28px; font-family: "Open Sans", sans-serif; }
.count b { color: #4874b4; }
.count .ico { margin-left: 28px; }

/* Dock */
.desktop {
  position: relative;
  padding: 2px 69px 10px 70px;
  background: linear-gradient(90deg, #3a3033, #5d4b4b 30%, #52403f 55%, #594a4d 80%, #3e3038);
}
.desktop::before {
  content: "";
  position: absolute;
  right: 42px;
  top: 2px;
  width: 116px;
  height: 101px;
  background: linear-gradient(#8a8a8a, #e8e8e8);
}
.dock {
  position: relative;
  height: 94px;
  padding: 0 4px;
  display: flex;
  align-items: center;
  border: 2px solid #b4b4b4;
  border-radius: 28px;
  background: #0f0f0f;
}
.app {
  flex: 0 1 76px;
  height: 90px;
  padding-bottom: 6px;
  display: flex;
  align-items: center;
  justify-content: center;
  position: relative;
}
.app.open::after {
  content: "";
  position: absolute;
  bottom: 2px;
  width: 8px;
  height: 8px;
  border-radius: 50%;
  background: #8f8f8f;
}
.note {
  position: absolute;
  right: 2px;
  top: 6px;
  width: 27px;
  height: 27px;
  border-radius: 50%;
  background: #e14b3d;
  color: #fff;
  text-align: center;
  font-size: 16px;
  line-height: 27px;
}
.rule { flex: none; width: 2px; height: 70px; margin: 0 16px; background: #4a4a4a; }
```
